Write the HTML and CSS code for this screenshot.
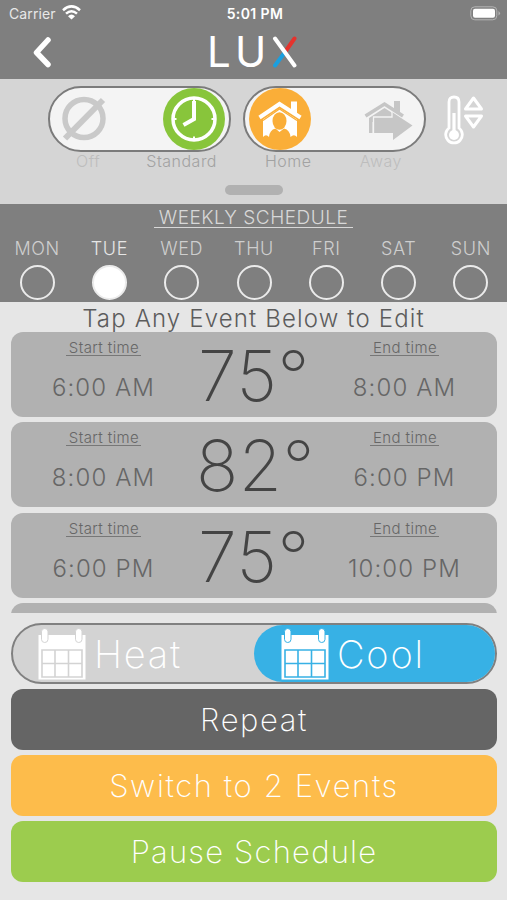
FILE: index.html
```html
<!DOCTYPE html>
<html lang="en">
<head>
  <meta charset="UTF-8">
  <meta name="viewport" content="width=device-width, initial-scale=1.0">
  <title>LUX Weekly Schedule</title>
  <link rel="stylesheet" href="styles.css">
</head>
<body>
  <header class="header">
    <div class="status-bar">
      <div class="carrier">
        <span class="carrier-name">Carrier</span>
        <svg width="19" height="15" viewBox="0 0 19 15" fill="none" stroke="#fff" stroke-width="2.5">
          <path d="M1 5.2Q9.500-2.400 18 5.200M4 8.700Q9.500 3.700 15 8.700"/>
          <path d="M6 11.200Q9.500 8 13 11.200L9.500 14.600Z" fill="#fff" stroke="none"/>
        </svg>
      </div>
      <div class="clock">5:01 PM</div>
      <div class="battery">
        <svg width="31" height="15" viewBox="0 0 31 15">
          <rect x="0.800" y="0.800" width="26" height="13" rx="4" fill="none" stroke="#b4b4b4"/>
          <rect x="3" y="2.800" width="22" height="9" rx="2" fill="#fff"/>
          <path d="M28.500 5q3 2.300 0 4.600z" fill="#b4b4b4"/>
        </svg>
      </div>
    </div>
    <div class="nav-bar">
      <svg class="back" width="20" height="32" viewBox="0 0 20 32" fill="none" stroke="#fff" stroke-width="5.500" stroke-linecap="round" stroke-linejoin="round">
        <path d="M16 4L4.500 16.500L16 28.500"/>
      </svg>
      <div class="logo">
        <span class="logo-l">L</span><span class="logo-u">U</span>
        <svg width="26" height="32" viewBox="0 0 26 32" fill="none" stroke-width="4" stroke-linecap="round">
          <path d="M22.500 2.500L13 16" stroke="#e5332d"/>
          <path d="M3 29.500L13 16" stroke="#1b9fdf"/>
          <path d="M3 2.500L22.500 29.500" stroke="#fff"/>
        </svg>
      </div>
    </div>
  </header>

  <section class="modes">
    <div class="mode">
      <div class="pill">
        <svg class="off-icon" width="46" height="46" viewBox="0 0 46 46" fill="none" stroke="#c9c9c9">
          <circle cx="22" cy="22.500" r="19" stroke-width="5.500"/>
          <path d="M3 42.500L41 4" stroke-width="6"/>
        </svg>
        <div class="knob knob-green">
          <svg width="46" height="46" viewBox="0 0 46 46" fill="none" stroke="#fff">
            <circle cx="23" cy="23" r="21" stroke-width="3.500"/>
            <path d="M23 3v2.500M23 40.500v2.500M3 23h2.500M40.500 23h2.500" stroke-width="2"/>
            <path d="M23 5V23L12.500 29" stroke-width="4"/>
          </svg>
        </div>
      </div>
      <div class="mode-labels"><span class="faint">Off</span><span>Standard</span></div>
    </div>
    <div class="mode">
      <div class="pill">
        <div class="knob knob-orange">
          <svg width="44" height="38" viewBox="0 0 44 38">
            <path d="M1.500 17.500L21.500 4L42.500 17.500" fill="none" stroke="#fff" stroke-width="4"/>
            <path d="M33 11V1.500h6v13.500z" fill="#fff"/>
            <path d="M5 19.500L21.500 8.500L39 19.500V37Q36 33.500 32.500 37Q32 30 26 28.500L21.500 32L17.500 28.500Q11.500 30 11 37Q8 33.500 5 37Z" fill="#fff"/>
            <path d="M5 20.500L21.500 9L39 20.500" fill="none" stroke="#faae38" stroke-width="1.200"/>
            <ellipse cx="21.500" cy="21" rx="7" ry="8.800" fill="#faae38"/>
          </svg>
        </div>
        <svg class="away-icon" width="50" height="40" viewBox="0 0 50 40">
          <path d="M1.500 16L20.500 4L39 16" fill="none" stroke="#c6c6c6" stroke-width="3.500"/>
          <path d="M30 9V1h6v13zM5 18L20.500 8L33 16V22H5ZM5 18h3.500v15H5z" fill="#c6c6c6"/>
          <path d="M9 17H28V12L48.500 25.500L29 40V33H9Z" fill="#c6c6c6"/>
          <path d="M9.500 33V17H28V12" fill="none" stroke="#f4f4f4" stroke-width="1.300"/>
        </svg>
      </div>
      <div class="mode-labels labels-home"><span>Home</span><span class="faint">Away</span></div>
    </div>
    <svg class="thermo" width="42" height="50" viewBox="0 0 42 50" fill="none" stroke="#fff">
      <path d="M5 33V7Q5 2 10 2T15 7V33A8.300 8.300 0 1 1 5 33Z" stroke-width="2.800"/>
      <path d="M10 18V39" stroke-width="3.200"/>
      <circle cx="10" cy="40" r="5" fill="#fff" stroke="none"/>
      <path d="M29.500 3L37.500 14H21.500ZM29.500 32L37.500 21H21.500Z" stroke-width="3" stroke-linejoin="round"/>
    </svg>
    <div class="handle"></div>
  </section>

  <section class="week">
    <h1 class="week-title">WEEKLY SCHEDULE</h1>
    <div class="days">
      <div class="day">MON<span class="dot"></span></div>
      <div class="day active">TUE<span class="dot"></span></div>
      <div class="day">WED<span class="dot"></span></div>
      <div class="day">THU<span class="dot"></span></div>
      <div class="day">FRI<span class="dot"></span></div>
      <div class="day">SAT<span class="dot"></span></div>
      <div class="day">SUN<span class="dot"></span></div>
    </div>
  </section>

  <p class="hint">Tap Any Event Below to Edit</p>

  <main class="events">
    <div class="event">
      <div class="time"><span class="time-label">Start time</span><span class="time-value">6:00 AM</span></div>
      <div class="temp">75°</div>
      <div class="time"><span class="time-label">End time</span><span class="time-value">8:00 AM</span></div>
    </div>
    <div class="event">
      <div class="time"><span class="time-label">Start time</span><span class="time-value">8:00 AM</span></div>
      <div class="temp">82°</div>
      <div class="time"><span class="time-label">End time</span><span class="time-value">6:00 PM</span></div>
    </div>
    <div class="event">
      <div class="time"><span class="time-label">Start time</span><span class="time-value">6:00 PM</span></div>
      <div class="temp">75°</div>
      <div class="time"><span class="time-label">End time</span><span class="time-value">10:00 PM</span></div>
    </div>
    <div class="event"></div>
  </main>

  <footer class="actions">
    <div class="system">
      <div class="system-option heat">
        <svg width="48" height="52" viewBox="0 0 48 52">
          <path d="M0.500 7H47.500V51.500H0.500Z" fill="#fff"/>
          <path d="M4 22H44V49H4ZM17 22V49M30.500 22V49M4 35.500H44" fill="none" stroke="#d3d3d3" stroke-width="1.600"/>
          <rect x="3.500" y="0.500" width="6.500" height="14" rx="3.200" fill="#fff" stroke="#d3d3d3"/>
          <rect x="37.500" y="0.500" width="6.500" height="14" rx="3.200" fill="#fff" stroke="#d3d3d3"/>
        </svg>
        <span>Heat</span>
      </div>
      <div class="system-option cool">
        <svg width="48" height="52" viewBox="0 0 48 52">
          <path d="M0.500 7H47.500V51.500H0.500Z" fill="#fff"/>
          <path d="M4 22H44V49H4ZM17 22V49M30.500 22V49M4 35.500H44" fill="none" stroke="#37b1e5" stroke-width="1.600"/>
          <rect x="3.500" y="0.500" width="6.500" height="14" rx="3.200" fill="#fff" stroke="#37b1e5"/>
          <rect x="37.500" y="0.500" width="6.500" height="14" rx="3.200" fill="#fff" stroke="#37b1e5"/>
        </svg>
        <span>Cool</span>
      </div>
    </div>
    <button class="btn btn-repeat">Repeat</button>
    <button class="btn btn-switch">Switch to 2 Events</button>
    <button class="btn btn-pause">Pause Schedule</button>
  </footer>
</body>
</html>
```
FILE: styles.css
```css
* {
  box-sizing: border-box;
}
body {
  margin: 0;
  width: 507px;
  height: 900px;
  overflow: hidden;
  background: #e6e6e6;
  font-family: Inter, "Open Sans", sans-serif;
  font-weight: 300;
}
svg {
  display: block;
  flex: none;
}

/* header */
.header {
  height: 79px;
  background: #7f7f7f;
  color: #fff;
}
.status-bar {
  display: grid;
  grid-template-columns: 1fr auto 1fr;
  align-items: center;
  height: 27px;
  padding: 0 6px 0 9px;
}
.carrier {
  display: flex;
  gap: 6px;
  font-size: 14px;
  font-weight: 400;
  letter-spacing: 0.1px;
  color: #e8e8e8;
}
.carrier-name {
  line-height: 17px;
}
.clock {
  font-size: 14px;
  font-weight: 600;
  letter-spacing: 0.4px;
}
.battery {
  justify-self: end;
}
.nav-bar {
  display: flex;
  padding: 9px 0 0 32px;
}
.logo {
  display: flex;
  margin-left: 155px;
  font-size: 42px;
  font-weight: 400;
  line-height: 32px;
}
.logo-l {
  width: 28px;
}
.logo-u {
  width: 37px;
}

/* mode switches */
.modes {
  display: flex;
  flex-wrap: wrap;
  align-content: flex-start;
  height: 125px;
  padding: 7px 0 0 48px;
  background: #d5d5d5;
  column-gap: 12px;
}
.mode {
  width: 183px;
}
.pill {
  display: flex;
  justify-content: space-between;
  align-items: center;
  height: 66px;
  padding: 0 4px;
  border: 2px solid #7b7b7b;
  border-radius: 33px;
  background: #f4f4f4;
}
.off-icon {
  margin-left: 8px;
}
.away-icon {
  margin: 2px 6px 0 0;
}
.knob {
  display: flex;
  align-items: center;
  justify-content: center;
  width: 62px;
  height: 62px;
  border-radius: 50%;
}
.knob-green {
  background: #88c53b;
}
.knob-orange {
  background: #faae38;
}
.mode-labels {
  display: flex;
  justify-content: space-between;
  height: 20px;
  padding: 0 14px 0 28px;
  font-size: 16px;
  line-height: 19px;
  letter-spacing: 0.5px;
  color: #a2a2a2;
}
.labels-home {
  padding: 0 24px 0 22px;
}
.faint {
  color: #bdbdbd;
}
.thermo {
  margin: 9px 0 0 6px;
}
.handle {
  width: 58px;
  height: 10px;
  margin: 13px 0 0 177px;
  border-radius: 5px;
  background: #b1b1b1;
}

/* weekly schedule */
.week {
  display: flex;
  flex-direction: column;
  align-items: center;
  height: 98px;
  background: #7f7f7f;
}
.week-title {
  width: 199px;
  height: 24px;
  margin: 0;
  border-bottom: 1px solid #d8d8d8;
  font-size: 19px;
  font-weight: 300;
  line-height: 28px;
  letter-spacing: 0.5px;
  text-align: center;
  white-space: nowrap;
  color: #d8d8d8;
}
.days {
  display: grid;
  grid-template-columns: repeat(7, 72.3px);
  margin: 9px 0 0 1px;
}
.day {
  display: flex;
  flex-direction: column;
  align-items: center;
  font-size: 18px;
  line-height: 24px;
  letter-spacing: 0.6px;
  color: #cecece;
}
.active {
  color: #e6e6e6;
}
.dot {
  width: 35px;
  height: 35px;
  margin-top: 4px;
  border: 2px solid #ebebeb;
  border-radius: 50%;
}
.active .dot {
  background: #fff;
}

/* events */
.hint {
  height: 30px;
  margin: 0;
  font-size: 24px;
  line-height: 33px;
  letter-spacing: 1.15px;
  text-align: center;
  color: #5c5c5c;
}
.events {
  display: flex;
  flex-direction: column;
  gap: 5.3px;
  height: 281px;
  padding: 0 10px 0 11px;
  overflow: hidden;
}
.event {
  display: grid;
  grid-template-columns: 185px 116px 185px;
  flex: none;
  height: 85px;
  border-radius: 12px;
  background: #b1b1b1;
}
.time {
  display: flex;
  flex-direction: column;
  align-items: center;
  color: #666;
}
.time-label {
  height: 24px;
  padding: 0 2px 0 3px;
  border-bottom: 1px solid #777;
  font-size: 15px;
  line-height: 31px;
  letter-spacing: 0.4px;
}
.time-value {
  margin-top: 15px;
  font-size: 24px;
  line-height: 33px;
  letter-spacing: 1.1px;
}
.temp {
  font-size: 70px;
  font-weight: 200;
  line-height: 88px;
  letter-spacing: 0.5px;
  text-align: center;
  white-space: nowrap;
  color: #444;
}

/* bottom controls */
.actions {
  display: flex;
  flex-direction: column;
  gap: 5px;
  padding: 10px 10px 0 11px;
}
.system {
  display: grid;
  grid-template-columns: 1fr 1fr;
  height: 61px;
  border: 2px solid #808080;
  border-radius: 31px;
  background: #d3d3d3;
  overflow: hidden;
}
.system-option {
  display: flex;
  align-items: center;
  gap: 8px;
  padding-left: 25px;
  font-size: 38px;
  font-weight: 200;
  letter-spacing: 1.8px;
  color: #fff;
}
.cool {
  padding-left: 27px;
  border-radius: 30px 0 0 30px;
  background: #37b1e5;
}
.btn {
  height: 61px;
  padding: 0;
  border: 0;
  border-radius: 12px;
  font-family: inherit;
  font-size: 31px;
  font-weight: 200;
  letter-spacing: 1.6px;
  color: #fff;
}
.btn-repeat {
  background: #656565;
}
.btn-switch {
  background: #fdbc4b;
}
.btn-pause {
  background: #9ccc4e;
  letter-spacing: 1.2px;
}
```
